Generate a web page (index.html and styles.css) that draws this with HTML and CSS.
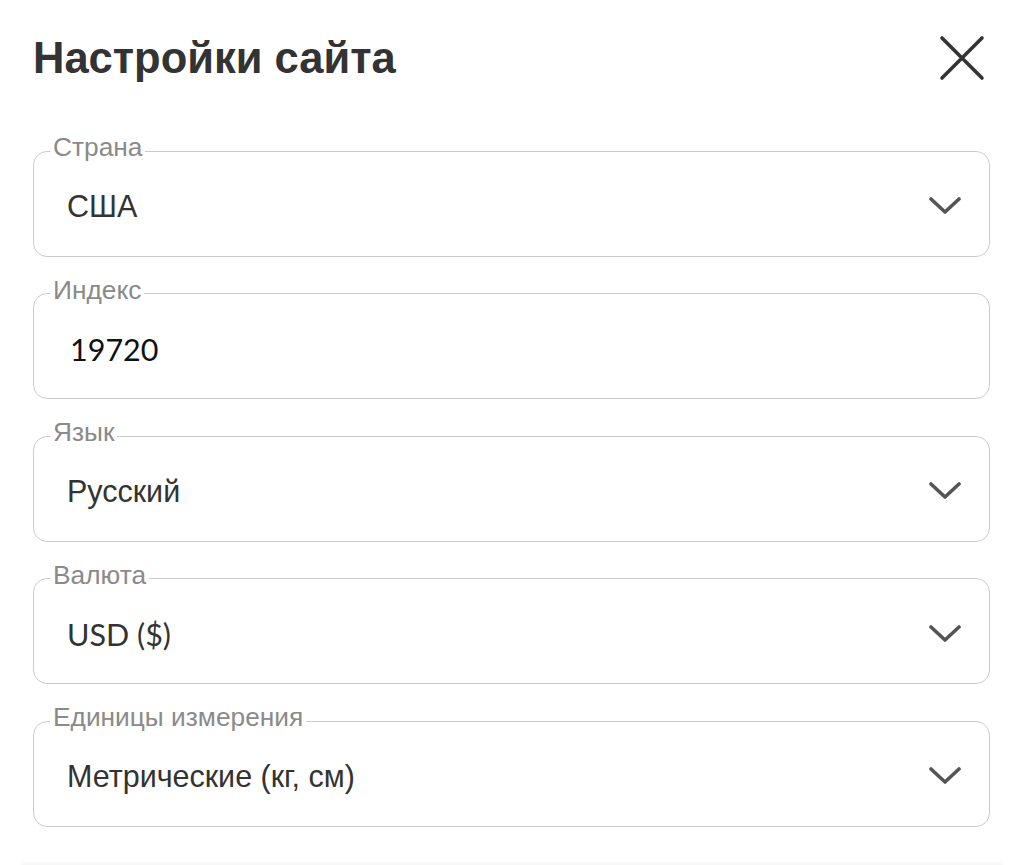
FILE: index.html
```html
<html>
<head>
  <meta charset="utf-8">
  <link rel="stylesheet" href="styles.css">
</head>
<body>
  <div class="sheet">
    <div class="sheet-head">
      <h1 class="title">Настройки сайта</h1>
      <button type="button" class="close" aria-label="Закрыть">
        <svg width="46" height="46" viewBox="0 0 46 46">
          <path d="M3 3 L43 43 M43 3 L3 43" stroke="#333" stroke-width="3.6" stroke-linecap="round" fill="none"/>
        </svg>
      </button>
    </div>

    <fieldset class="field">
      <legend>Страна</legend>
      <div class="field-row">
        <span class="value">США</span>
        <svg class="chevron" width="32" height="18" viewBox="0 0 32 18"><path d="M2 2 L16 15 L30 2" /></svg>
      </div>
    </fieldset>

    <fieldset class="field">
      <legend>Индекс</legend>
      <div class="field-row">
        <span class="value value-latin value-input">19720</span>
      </div>
    </fieldset>

    <fieldset class="field">
      <legend>Язык</legend>
      <div class="field-row">
        <span class="value">Русский</span>
        <svg class="chevron" width="32" height="18" viewBox="0 0 32 18"><path d="M2 2 L16 15 L30 2" /></svg>
      </div>
    </fieldset>

    <fieldset class="field">
      <legend>Валюта</legend>
      <div class="field-row">
        <span class="value value-latin">USD ($)</span>
        <svg class="chevron" width="32" height="18" viewBox="0 0 32 18"><path d="M2 2 L16 15 L30 2" /></svg>
      </div>
    </fieldset>

    <fieldset class="field">
      <legend>Единицы измерения</legend>
      <div class="field-row">
        <span class="value">Метрические (кг, см)</span>
        <svg class="chevron" width="32" height="18" viewBox="0 0 32 18"><path d="M2 2 L16 15 L30 2" /></svg>
      </div>
    </fieldset>

    <div class="footer-bar"></div>
  </div>
</body>
</html>
```

FILE: styles.css
```css
body {
  margin: 0;
  background: #fff;
  font-family: "Liberation Sans", Arial, sans-serif;
  color: #333;
}

.sheet {
  padding: 10px 34px 0 33px;
}

.sheet-head {
  display: flex;
  justify-content: space-between;
  align-items: center;
  height: 122px;
  padding-bottom: 26px;
  box-sizing: border-box;
}

.title {
  margin: 0;
  font-size: 43.5px;
  font-weight: bold;
  color: #333;
}

.close {
  border: none;
  background: none;
  padding: 0;
  margin-right: 5px;
  width: 46px;
  height: 46px;
}

.field {
  margin: 0 0 18px 0;
  padding: 0 28px 13.5px 16px;
  border: 1.5px solid #cbcbcb;
  border-radius: 14px;
}

.field legend {
  padding: 0 3px 8px;
  font-size: 26.3px;
  line-height: 30px;
  color: #8a8a8a;
}

.field-row {
  display: flex;
  justify-content: space-between;
  align-items: center;
  height: 72px;
  padding-left: 17px;
}

.value {
  font-size: 30.5px;
  color: #333;
}

.value-latin {
  font-family: Lato, "Liberation Sans", sans-serif;
}

.value-input {
  color: #111;
  padding-left: 3px;
}

.chevron path {
  fill: none;
  stroke: #555;
  stroke-width: 3.6;
  stroke-linecap: round;
  stroke-linejoin: round;
}

.footer-bar {
  margin: 36px -14px 0 -13px;
  height: 40px;
  background: #f7f7f7;
  border-radius: 6px;
  box-shadow: 0 -1px 2px rgba(0, 0, 0, 0.03);
}
```
